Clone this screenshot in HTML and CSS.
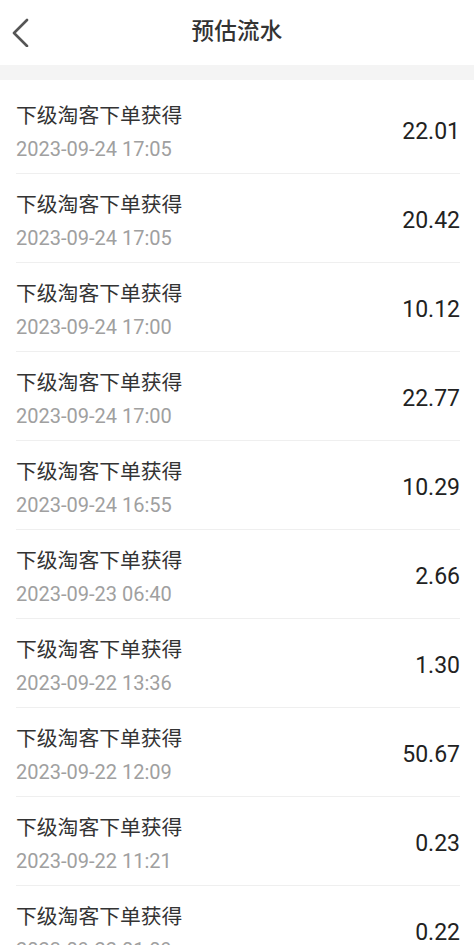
FILE: index.html
```html
<!DOCTYPE html>
<html lang="zh-CN">
<head>
    <meta charset="UTF-8">
    <meta name="viewport" content="width=device-width, initial-scale=1.0">
    <title>预估流水</title>
    <link rel="stylesheet" href="styles.css">
</head>
<body>
    <header class="nav">
        <svg class="back" width="20" height="30" viewBox="0 0 20 30">
            <path d="M15 3 L2 16 L15 29" fill="none" stroke="#555" stroke-width="2.6" stroke-linecap="round" stroke-linejoin="round"/>
        </svg>
        <h1>预估流水</h1>
    </header>
    <div class="band"></div>

    <ul class="list">
        <li class="row">
            <div class="info">
                <div class="title">下级淘客下单获得</div>
                <div class="date">2023-09-24 17:05</div>
            </div>
            <div class="amount">22.01</div>
        </li>
        <li class="row">
            <div class="info">
                <div class="title">下级淘客下单获得</div>
                <div class="date">2023-09-24 17:05</div>
            </div>
            <div class="amount">20.42</div>
        </li>
        <li class="row">
            <div class="info">
                <div class="title">下级淘客下单获得</div>
                <div class="date">2023-09-24 17:00</div>
            </div>
            <div class="amount">10.12</div>
        </li>
        <li class="row">
            <div class="info">
                <div class="title">下级淘客下单获得</div>
                <div class="date">2023-09-24 17:00</div>
            </div>
            <div class="amount">22.77</div>
        </li>
        <li class="row">
            <div class="info">
                <div class="title">下级淘客下单获得</div>
                <div class="date">2023-09-24 16:55</div>
            </div>
            <div class="amount">10.29</div>
        </li>
        <li class="row">
            <div class="info">
                <div class="title">下级淘客下单获得</div>
                <div class="date">2023-09-23 06:40</div>
            </div>
            <div class="amount">2.66</div>
        </li>
        <li class="row">
            <div class="info">
                <div class="title">下级淘客下单获得</div>
                <div class="date">2023-09-22 13:36</div>
            </div>
            <div class="amount">1.30</div>
        </li>
        <li class="row">
            <div class="info">
                <div class="title">下级淘客下单获得</div>
                <div class="date">2023-09-22 12:09</div>
            </div>
            <div class="amount">50.67</div>
        </li>
        <li class="row">
            <div class="info">
                <div class="title">下级淘客下单获得</div>
                <div class="date">2023-09-22 11:21</div>
            </div>
            <div class="amount">0.23</div>
        </li>
        <li class="row">
            <div class="info">
                <div class="title">下级淘客下单获得</div>
                <div class="date">2023-09-22 01:09</div>
            </div>
            <div class="amount">0.22</div>
        </li>
    </ul>
</body>
</html>
```

FILE: styles.css
```css
body {
    margin: 0;
    padding: 0;
    background-color: #fff;
    font-family: Roboto, "Noto Sans CJK SC", sans-serif;
    color: #333;
    overflow: hidden;
}

/* top bar */
.nav {
    height: 65px;
    box-sizing: border-box;
    padding-bottom: 3px;
    display: flex;
    align-items: center;
    justify-content: center;
    position: relative;
}

.nav .back {
    position: absolute;
    left: 12px;
    top: 17px;
}

.nav h1 {
    margin: 0;
    font-size: 22.5px;
    line-height: 30px;
    font-weight: 500;
    color: #333;
    letter-spacing: 0.3px;
}

.band {
    height: 15px;
    background-color: #f4f4f4;
}

/* list */
.list {
    list-style: none;
    margin: 0;
    padding: 5px 0 0;
}

.row {
    height: 88px;
    margin: 0 14px 0 16px;
    display: flex;
    justify-content: space-between;
    border-bottom: 1px solid #efefef;
}

.info {
    display: flex;
    flex-direction: column;
    gap: 8px;
    padding-top: 19px;
}

.title {
    font-size: 20.8px;
    line-height: 25px;
    color: #333;
}

.date {
    font-size: 20px;
    line-height: 25px;
    color: #a0a0a0;
}

.amount {
    align-self: center;
    padding-top: 4px;
    font-size: 23px;
    color: #222;
}
```
